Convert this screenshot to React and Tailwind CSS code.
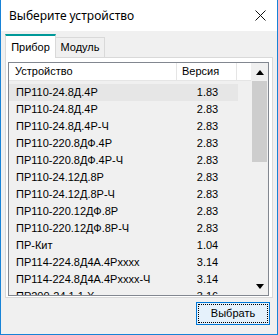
import React from 'react';

const devices = [
  { name: 'ПР110-24.8Д.4Р', ver: '1.83' },
  { name: 'ПР110-24.8Д.4Р', ver: '2.83' },
  { name: 'ПР110-24.8Д.4Р-Ч', ver: '2.83' },
  { name: 'ПР110-220.8ДФ.4Р', ver: '2.83' },
  { name: 'ПР110-220.8ДФ.4Р-Ч', ver: '2.83' },
  { name: 'ПР110-24.12Д.8Р', ver: '2.83' },
  { name: 'ПР110-24.12Д.8Р-Ч', ver: '2.83' },
  { name: 'ПР110-220.12ДФ.8Р', ver: '2.83' },
  { name: 'ПР110-220.12ДФ.8Р-Ч', ver: '2.83' },
  { name: 'ПР-Кит', ver: '1.04' },
  { name: 'ПР114-224.8Д4А.4Рxxxx', ver: '3.14' },
  { name: 'ПР114-224.8Д4А.4Рxxxx-Ч', ver: '3.14' },
  { name: 'ПР200-24.1.1.X', ver: '3.16' },
];

export default function App() {
  return (
    <div
      className="w-[278px] h-[335px] flex flex-col bg-[#f0f0f0] border-x border-b border-[#1883d7] overflow-hidden text-[11px] text-black"
      style={{ fontFamily: '"Liberation Sans", Arial, sans-serif' }}
    >
      {/* title bar */}
      <div className="h-[31px] bg-white flex items-center justify-between pl-2 pr-[11px] shrink-0">
        <span className="text-[12px] text-black" style={{ fontFamily: '"Noto Sans", sans-serif' }}>
          Выберите устройство
        </span>
        <svg width="11" height="11" viewBox="0 0 11 11">
          <path d="M0.5 0.5 L10.5 10.5 M10.5 0.5 L0.5 10.5" stroke="#111" strokeWidth="1" />
        </svg>
      </div>

      {/* tabs */}
      <div className="flex items-end pl-[4px] h-[24px] mt-[2px] shrink-0">
        <div className="h-[24px] w-[51px] bg-white border-l border-r border-[#d9d9d9] border-t-2 border-t-[#009999] flex items-center justify-center relative z-10 -mb-px">
          Прибор
        </div>
        <div className="h-[20px] w-[49px] bg-[#f0f0f0] border-t border-r border-[#d9d9d9] flex items-center justify-center">
          Модуль
        </div>
      </div>

      {/* tab panel */}
      <div className="mx-[4px] h-[241px] border border-[#d9d9d9] bg-white pt-[4px] pl-[2px] pr-[3px] shrink-0">
        <div className="h-[234px] border border-[#828790] bg-[#f0f0f0] flex overflow-hidden">
          <div className="flex-1 flex flex-col">
            <div className="h-[18px] bg-white flex border-b border-[#e5e5e5] shrink-0">
              <div className="w-[168px] pl-[6px] flex items-center border-r border-[#e5e5e5]">Устройство</div>
              <div className="w-[60px] pl-[5px] flex items-center border-r border-[#e5e5e5]">Версия</div>
              <div className="flex-1" />
            </div>
            <div className="pt-[3px] flex flex-col">
              {devices.map((d, i) => (
                <div
                  key={i}
                  className={`h-[17px] w-[229px] flex items-center shrink-0 ${i === 0 ? 'bg-[#e6e6e6]' : ''}`}
                >
                  <div className="w-[168px] pl-[7px] whitespace-nowrap">{d.name}</div>
                  <div className="w-[61px] text-center">{d.ver}</div>
                </div>
              ))}
            </div>
          </div>

          {/* scrollbar */}
          <div className="w-[17px] flex flex-col bg-[#f0f0f0]">
            <div className="h-[18px] flex items-center justify-center">
              <svg width="8" height="5" viewBox="0 0 8 5">
                <path d="M0 5 L4 0 L8 5 Z" fill="#000" />
              </svg>
            </div>
            <div className="h-[81px] mx-px bg-[#cdcdcd]" />
            <div className="flex-1" />
            <div className="h-[18px] flex items-center justify-center">
              <svg width="8" height="5" viewBox="0 0 8 5">
                <path d="M0 0 L8 0 L4 5 Z" fill="#000" />
              </svg>
            </div>
          </div>
        </div>
      </div>

      {/* footer */}
      <div className="flex justify-end pr-[7px] pt-[4px]">
        <button className="w-[74px] h-[23px] border border-[#0078d7] bg-[#e5f1fb] p-px">
          <div className="w-full h-full border border-dotted border-black flex items-center justify-center text-[11px]">
            Выбрать
          </div>
        </button>
      </div>
    </div>
  );
}
